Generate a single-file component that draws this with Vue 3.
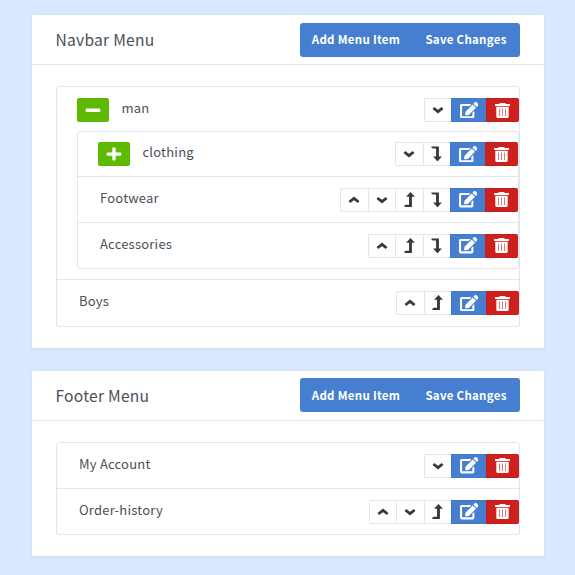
<script setup>
import { h } from 'vue'

const shapes = {
  up: { box: '0 0 12 8', w: 12, h: 8, d: 'M1.4 6 L6 2.3 L10.6 6', line: true },
  down: { box: '0 0 12 8', w: 12, h: 8, d: 'M1.4 2 L6 5.7 L10.6 2', line: true },
  out: { box: '0 0 10 14', w: 11, h: 15.4, d: 'M5.9 0 L9.9 4.4 H7.2 V13.6 H0.3 V12.6 L1.6 11.7 H4.6 V4.4 H1.9 Z' },
  into: { box: '0 0 10 14', w: 11, h: 15.4, d: 'M0.3 .4 H7.2 V9.6 H9.9 L5.9 14 L1.9 9.6 H4.6 V2.3 H1.6 L.3 1.4 Z' },
  edit: {
    box: '0 0 576 512', w: 18.5, h: 16.4,
    d: 'M402.6 83.2l90.2 90.2c3.8 3.8 3.8 10 0 13.8L274.4 405.6l-92.8 10.3c-12.4 1.4-22.9-9.1-21.5-21.5l10.3-92.8L388.8 83.2c3.8-3.8 10-3.8 13.8 0zm162-22.9l-48.8-48.8c-15.2-15.2-39.9-15.2-55.2 0l-35.4 35.4c-3.8 3.8-3.8 10 0 13.8l90.2 90.2c3.8 3.8 10 3.8 13.8 0l35.4-35.4c15.2-15.3 15.2-40 0-55.2zM384 346.2V448H64V128h229.8c3.2 0 6.2-1.3 8.5-3.5l40-40c7.6-7.6 2.2-20.5-8.5-20.5H48C21.5 64 0 85.5 0 112v352c0 26.5 21.5 48 48 48h352c26.5 0 48-21.5 48-48V306.2c0-10.7-12.9-16-20.5-8.5l-40 40c-2.2 2.3-3.5 5.3-3.5 8.5z'
  },
  trash: {
    box: '0 0 15 15', w: 15, h: 15,
    d: 'M0.4 1H4.2L4.9 0H10.1L10.8 1H14.6Q15 1 15 1.4V2.6Q15 3 14.6 3H.4Q0 3 0 2.6V1.4Q0 1 .4 1ZM1.3 3.8H13.7V13.4Q13.7 15 12.1 15H2.9Q1.3 15 1.3 13.4ZM4.2 5.6V13H4.8V5.6ZM7.2 5.6V13H7.8V5.6ZM10.2 5.6V13H10.8V5.6Z'
  },
  minus: { box: '0 0 16 16', w: 16, h: 16, d: 'M1.8 6.4H14.2Q15.4 6.4 15.4 7.6V8.8Q15.4 10 14.2 10H1.8Q.6 10 .6 8.8V7.6Q.6 6.4 1.8 6.4Z' },
  plus: { box: '0 0 16 16', w: 16, h: 16, d: 'M7.2 1.6H8.8Q9.7 1.6 9.7 2.5V6.4H14.4Q15.3 6.4 15.3 7.3V8.8Q15.3 9.7 14.4 9.7H9.7V13.6Q9.7 14.5 8.8 14.5H7.2Q6.3 14.5 6.3 13.6V9.7H1.6Q.7 9.7 .7 8.8V7.3Q.7 6.4 1.6 6.4H6.3V2.5Q6.3 1.6 7.2 1.6Z' }
}

const Icon = ({ name }) => {
  const s = shapes[name]
  return h('svg', { viewBox: s.box, width: s.w, height: s.h, 'aria-hidden': 'true' }, [
    h('path', s.line
      ? { d: s.d, fill: 'none', stroke: 'currentColor', 'stroke-width': 2.8 }
      : { d: s.d, fill: 'currentColor', 'fill-rule': 'evenodd' })
  ])
}
Icon.props = ['name']

const Actions = ({ moves }) =>
  h('div', { class: 'actions' }, [...moves, 'edit', 'trash'].map(n =>
    h('button', { class: ['act', n], type: 'button', 'aria-label': n }, [h(Icon, { name: n })])))
Actions.props = ['moves']

const menus = [
  {
    title: 'Navbar Menu', key: 'navbar',
    items: [
      {
        label: 'man', toggle: 'minus', moves: ['down'],
        children: [
          { label: 'clothing', toggle: 'plus', moves: ['down', 'into'] },
          { label: 'Footwear', moves: ['up', 'down', 'out', 'into'] },
          { label: 'Accessories', moves: ['up', 'out', 'into'] }
        ]
      },
      { label: 'Boys', moves: ['up', 'out'] }
    ]
  },
  {
    title: 'Footer Menu', key: 'footer',
    items: [
      { label: 'My Account', moves: ['down'] },
      { label: 'Order-history', moves: ['up', 'down', 'out'] }
    ]
  }
]
</script>

<template>
  <main class="page">
    <section v-for="menu in menus" :key="menu.key" class="card" :class="menu.key">
      <header class="head">
        <h2>{{ menu.title }}</h2>
        <div class="tools">
          <button type="button" class="add">Add Menu Item</button>
          <button type="button" class="save">Save Changes</button>
        </div>
      </header>
      <ul class="list">
        <li v-for="item in menu.items" :key="item.label" :class="{ parent: item.children }">
          <div class="row">
            <button v-if="item.toggle" class="toggle" type="button"><Icon :name="item.toggle" /></button>
            <span class="label">{{ item.label }}</span>
            <Actions :moves="item.moves" />
          </div>
          <ul v-if="item.children" class="list sub">
            <li v-for="child in item.children" :key="child.label">
              <div class="row">
                <button v-if="child.toggle" class="toggle" type="button"><Icon :name="child.toggle" /></button>
                <span class="label">{{ child.label }}</span>
                <Actions :moves="child.moves" />
              </div>
            </li>
          </ul>
        </li>
      </ul>
    </section>
  </main>
</template>

<style>
body { margin: 0; background: #d9e7ff; }
</style>

<style scoped>
.page {
  box-sizing: border-box;
  height: 575px;
  padding: 14px 30px 0 31px;
  background: #d9e7ff;
  color: #495057;
  font-family: "Noto Sans CJK SC", "Noto Sans", sans-serif;
  display: flex;
  flex-direction: column;
  gap: 21px;
}
.card {
  box-sizing: border-box;
  background: #fff;
  border: 1px solid #dae1ef;
  border-radius: 3px;
  box-shadow: 0 1px 2px rgba(0, 0, 0, .05);
}
.navbar { height: 335px; }
.footer { height: 187px; }
.head {
  box-sizing: border-box;
  height: 50px;
  padding: 0 24px 0 23.5px;
  border-bottom: 1px solid #e0e5ee;
  display: flex;
  justify-content: space-between;
  align-items: center;
}
.footer .head { padding-bottom: 1px; }
h2 { margin: 0; padding-bottom: 2px; font-size: 15.6px; font-weight: 400; line-height: 20px; letter-spacing: .25px; }
.footer h2 { padding-bottom: 1px; }
.tools {
  display: flex;
  width: 220px;
  height: 34px;
  background: #467fcf;
  border-radius: 3px;
}
button { font-family: inherit; border: 0; padding: 0; margin: 0; }
.add, .save { background: none; color: #fff; font-size: 11.5px; font-weight: 700; letter-spacing: .28px; padding-bottom: 2px; white-space: nowrap; }
.add { width: 112px; }
.save { width: 108px; }
.footer .add, .footer .save { padding-bottom: 0; }
.list {
  box-sizing: border-box;
  list-style: none;
  margin: 21px 24px 0;
  padding: 0;
  border: 1px solid #e0e5ee;
  border-radius: 3px;
}
.list li + li { border-top: 1px solid #e0e5ee; }
.navbar > .list > li:last-child > .row { height: 46px; }
.row { height: 45px; display: flex; align-items: center; padding-left: 22px; }
.label { flex: 1; font-size: 13px; line-height: 18px; letter-spacing: .22px; padding-bottom: 4px; }
.parent > .row { box-sizing: border-box; height: 44px; padding-top: 2px; }
.list.sub { margin: 0 0 10px 20px; }
.row:has(.toggle) { padding-left: 20px; }
.sub .row:has(.toggle) { height: 44px; }
.toggle {
  width: 32px;
  height: 24px;
  margin-right: 12.5px;
  border-radius: 2px;
  background: #5eba00;
  color: #fff;
  display: grid;
  place-items: center;
}
:deep(.actions) {
  display: flex;
  height: 24px;
  box-sizing: border-box;
}
:deep(.act) {
  box-sizing: border-box;
  width: 27.5px;
  height: 24px;
  padding: 0;
  border: 1px solid #e0e5ee;
  border-right: 0;
  background: #fff;
  color: #343a40;
  display: grid;
  place-items: center;
}
:deep(.act:first-child) { border-radius: 2px 0 0 2px; }
:deep(.act.edit) { width: 35px; background: #467fcf; border-color: #3f79cc; color: #fff; }
:deep(.act.trash) { width: 33px; padding-right: 1px; background: #cd201f; border-color: #c41d1c; color: #fff; border-radius: 0 2px 2px 0; }
</style>
